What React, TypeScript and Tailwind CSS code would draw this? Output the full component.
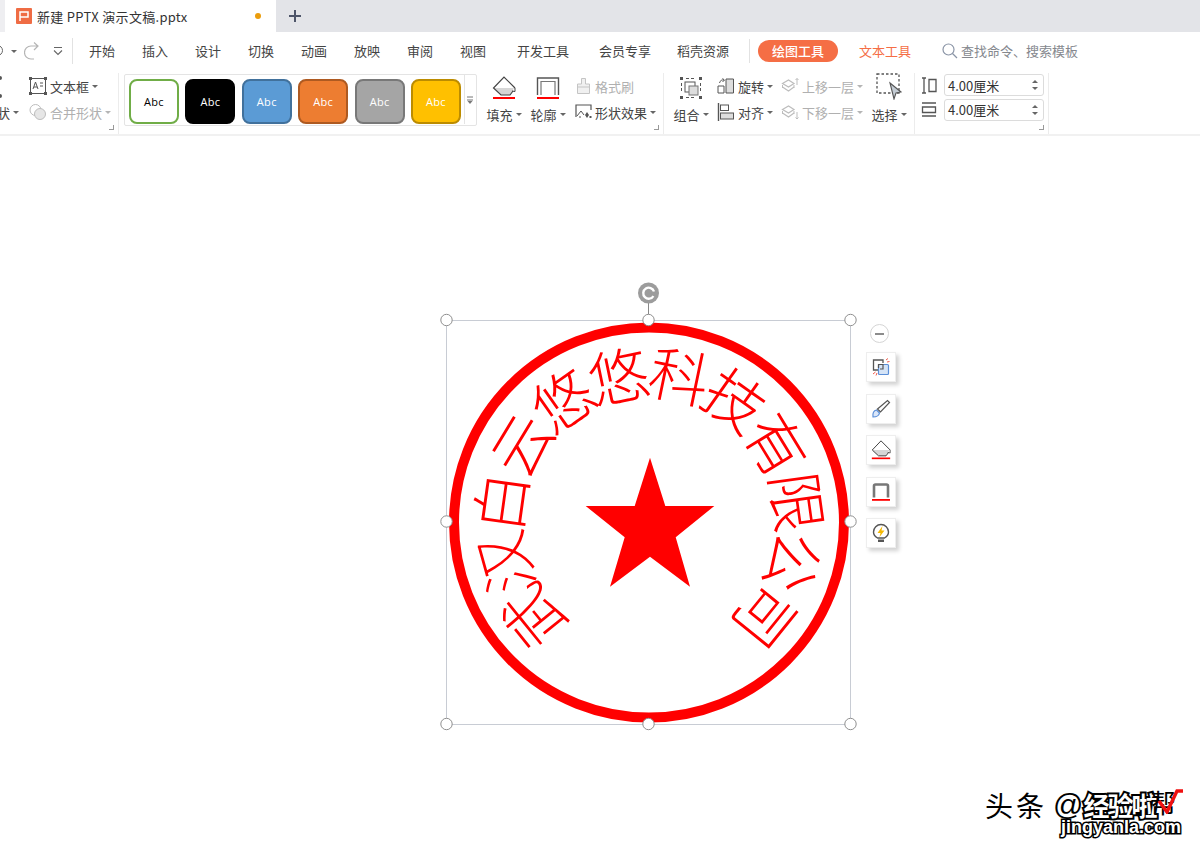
import React from 'react'

const menus = [
  { label: '开始', w: 'w-[53px]' },
  { label: '插入', w: 'w-[53px]' },
  { label: '设计', w: 'w-[53px]' },
  { label: '切换', w: 'w-[53px]' },
  { label: '动画', w: 'w-[53px]' },
  { label: '放映', w: 'w-[53px]' },
  { label: '审阅', w: 'w-[53px]' },
  { label: '视图', w: 'w-[57px]' },
  { label: '开发工具', w: 'w-[82px]' },
  { label: '会员专享', w: 'w-[78px]' },
  { label: '稻壳资源', w: 'w-[72px]' },
]

const swatches = [
  'bg-white border-[#70ad47] text-black',
  'bg-black border-black text-white',
  'bg-[#5b9bd5] border-[#41719c] text-white',
  'bg-[#ed7d31] border-[#ae5a21] text-white',
  'bg-[#a5a5a5] border-[#787878] text-white',
  'bg-[#ffc000] border-[#bc8c00] text-white',
]

const stampChars = '武汉白云悠悠科技有限公司'.split('')

function Caret({ light }: { light?: boolean }) {
  return (
    <span
      className={`ml-[3px] inline-block h-0 w-0 border-x-[3px] border-t-[3px] border-x-transparent ${
        light ? 'border-t-[#b5b5b5]' : 'border-t-[#666]'
      }`}
    />
  )
}

function CornerMark() {
  return (
    <span className="absolute bottom-[4px] right-[4px] h-[5px] w-[5px] border-b border-r border-[#999]" />
  )
}

function Icon({ size = 18, children }: { size?: number; children: React.ReactNode }) {
  return (
    <svg width={size} height={size} viewBox={`0 0 ${size} ${size}`} fill="none" className="shrink-0">
      {children}
    </svg>
  )
}

function Tool({
  icon,
  label,
  light,
  caret = true,
}: {
  icon: React.ReactNode
  label: string
  light?: boolean
  caret?: boolean
}) {
  return (
    <div className={`flex h-[26px] items-center ${light ? 'text-[#b0b0b0]' : 'text-[#444]'}`}>
      <span className="flex w-[21px] items-center">{icon}</span>
      <span className="whitespace-nowrap">{label}</span>
      {caret && <Caret light={light} />}
    </div>
  )
}

function BigTool({ icon, label, cls }: { icon: React.ReactNode; label: string; cls: string }) {
  return (
    <div className={`flex flex-col items-center text-[#444] ${cls}`}>
      <div className="flex h-[27px] items-end">{icon}</div>
      <div className="mt-[5px] flex h-[18px] items-center whitespace-nowrap">
        {label}
        <Caret />
      </div>
    </div>
  )
}

const FillIcon = ({ size = 24 }: { size?: number }) => (
  <svg width={size} height={size} viewBox="0 0 24 24" fill="none">
    <path d="M12 1 L23 12 L18 19 H9 L1.5 12 Z" fill="#fff" />
    <path d="M7 12 H22 L18 19 H9 L1.5 12 Z" fill="#d6d6d6" />
    <path d="M23 12 L12 1 L1.5 12 L9 19 H18 L21 15" stroke="#444" strokeWidth="1.2" />
    <path d="M23 12 V15.5 L20 15" stroke="#444" strokeWidth="1" />
    <rect x="1" y="21" width="22" height="2" fill="#f00" />
  </svg>
)

const OutlineIcon = ({ size = 24 }: { size?: number }) => (
  <svg width={size} height={size} viewBox="0 0 24 24" fill="none">
    <path d="M1.5 19 V2 H22.5 V19" stroke="#555" strokeWidth="1.4" />
    <path d="M5 19 V5.5 H19 V19" stroke="#777" strokeWidth="1.2" />
    <rect x="1" y="21" width="22" height="2" fill="#f00" />
  </svg>
)

const LayerIcon = ({ up }: { up?: boolean }) => (
  <Icon>
    <path d="M1.5 6.5 L7.5 3 L13 6.5 L7.5 10 Z" stroke="#bdbdbd" strokeWidth="1.2" />
    <path d="M1.5 10 L7.5 14 L13 10" stroke="#bdbdbd" strokeWidth="1.2" />
    <path d="M1.5 8 V11 M13 8 V11" stroke="#bdbdbd" />
    {up ? (
      <path d="M16 8 V1.5 M14.5 3 L16 1.5 L17.5 3" stroke="#bdbdbd" />
    ) : (
      <path d="M16 9 V16 M14.5 14.5 L16 16 L17.5 14.5" stroke="#bdbdbd" />
    )}
  </Icon>
)

export default function App() {
  return (
    <div className="relative flex h-[845px] w-[1200px] flex-col overflow-hidden bg-white font-['Noto_Sans_CJK_SC','Liberation_Sans',sans-serif] text-[13px] leading-none">
      {/* Tab bar */}
      <div className="flex h-[32px] shrink-0 items-center bg-[#e3e4e8]">
        <div className="h-full w-[5px] bg-[#eeeef1]" />
        <div className="flex h-full w-[271px] items-center bg-white pl-[11px]">
          <span className="flex h-[16px] w-[16px] items-center justify-center rounded-[1px] bg-[#ef6c44]">
            <svg width="12" height="12" viewBox="0 0 12 12" fill="none">
              <path d="M2 11 V2 H10 V7 H2" stroke="#fff" strokeWidth="1.5" />
            </svg>
          </span>
          <span className="ml-[5px] text-[13px] tracking-[0.3px] text-[#333]">新建 PPTX 演示文稿.pptx</span>
          <span className="ml-[67px] h-[6px] w-[6px] rounded-full bg-[#eb9d0c]" />
        </div>
        <svg width="14" height="14" viewBox="0 0 14 14" className="ml-[12px]">
          <path d="M7 1 V13 M1 7 H13" stroke="#4e5569" strokeWidth="2" />
        </svg>
      </div>

      {/* Menu row */}
      <div className="flex h-[37px] shrink-0 items-center text-[#444]">
        <div className="relative flex h-[26px] w-[73px] items-center border-r border-[#e2e2e2]">
          <span className="absolute -left-[8px] h-[11px] w-[11px] rounded-full border-[1.5px] border-[#666]" />
          <span className="absolute left-[8px] top-[12px] flex"><Caret /></span>
          <svg width="16" height="18" viewBox="0 0 16 18" fill="none" className="absolute left-[24px] top-[4px]">
            <path d="M10 17 H7 A6.5 6.5 0 0 1 7 4 H14 M10 0.5 L14 4 L10 8" stroke="#b5b5b5" strokeWidth="1.2" />
          </svg>
          <svg width="10" height="10" viewBox="0 0 10 10" fill="none" className="absolute left-[53px]">
            <path d="M1 1.5 H9 M1 4.5 L5 8.5 L9 4.5" stroke="#666" strokeWidth="1.1" />
          </svg>
        </div>
        <div className="ml-[16px] flex">
          {menus.map((m) => (
            <span key={m.label} className={`${m.w} whitespace-nowrap`}>
              {m.label}
            </span>
          ))}
        </div>
        <span className="h-[24px] w-px bg-[#e2e2e2]" />
        <span className="ml-[8px] flex h-[22px] w-[80px] items-center justify-center rounded-full bg-[#f56e45] font-medium text-white">
          绘图工具
        </span>
        <span className="ml-[21px] text-[#f56e45]">文本工具</span>
        <svg width="16" height="16" viewBox="0 0 16 16" fill="none" className="ml-[31px]">
          <circle cx="6.5" cy="6.5" r="5.5" stroke="#8a94a6" strokeWidth="1.2" />
          <path d="M10.5 10.5 L15 15" stroke="#8a94a6" strokeWidth="1.2" />
        </svg>
        <span className="ml-[3px] text-[#85888e]">查找命令、搜索模板</span>
      </div>

      {/* Ribbon */}
      <div className="flex h-[67px] shrink-0 border-b-2 border-[#f1f1f1] pt-[4px] text-[13px]">
        <div className="relative flex w-[119px] shrink-0 border-r border-[#ececec]">
          <div className="flex w-[29px] flex-col overflow-hidden text-[#444]">
            <div className="flex h-[26px] flex-col justify-between py-[3px]">
              <span className="-ml-[2px] h-[4px] w-[4px] rounded-full bg-[#555]" />
              <span className="-ml-[2px] -mb-[2px] h-[4px] w-[4px] rounded-full bg-[#555]" />
            </div>
            <div className="flex h-[26px] items-center pl-0">
              <span className="-ml-[3px]">状</span>
              <Caret />
            </div>
          </div>
          <div className="flex flex-col">
            <Tool
              label="文本框"
              icon={
                <Icon>
                  <rect x="1.5" y="1.5" width="15" height="15" stroke="#555" />
                  <path d="M4 12 L6.5 5 L9 12 M5 10 H8 M11 6 H14 M11 9 H14" stroke="#555" />
                  <path d="M0 0h3v3H0z M15 0h3v3h-3z M0 15h3v3H0z M15 15h3v3h-3z" fill="#555" />
                </Icon>
              }
            />
            <Tool
              label="合并形状"
              light
              icon={
                <Icon>
                  <circle cx="6.5" cy="7" r="5.5" stroke="#bdbdbd" />
                  <circle cx="11" cy="11" r="5.5" fill="#e6e6e6" stroke="#bdbdbd" />
                </Icon>
              }
            />
          </div>
          <CornerMark />
        </div>

        {/* Style gallery */}
        <div className="ml-[5px] mt-[1px] flex h-[52px] w-[353px] shrink-0 items-end rounded-[2px] border border-[#e4e4e4] pb-[1px] pl-[4px]">
          <div className="flex gap-[6.4px]">
            {swatches.map((s, i) => (
              <div
                key={i}
                className={`flex h-[45px] w-[50px] items-center justify-center rounded-[8px] border-[2px] font-['Open_Sans',sans-serif] text-[11px] tracking-[0.3px] ${s}`}
              >
                Abc
              </div>
            ))}
          </div>
          <div className="ml-[3px] flex h-full flex-1 items-center justify-center border-l border-[#e4e4e4]">
            <svg width="8" height="8" viewBox="0 0 8 8" fill="none">
              <path d="M1 1 H7 M1 4 H7" stroke="#777" />
              <path d="M1.5 5 L4 8 L6.5 5 Z" fill="#777" />
            </svg>
          </div>
        </div>

        {/* Fill / outline */}
        <div className="relative flex w-[187px] shrink-0 border-r border-[#ececec]">
          <BigTool cls="ml-[9px] w-[36px]" label="填充" icon={<FillIcon />} />
          <BigTool cls="ml-[8px] w-[36px]" label="轮廓" icon={<OutlineIcon />} />
          <div className="ml-[8px] flex flex-col">
            <Tool
              label="格式刷"
              light
              caret={false}
              icon={
                <span className="pl-[2px]">
                  <svg width="15" height="18" viewBox="0 0 15 18" fill="none">
                    <path d="M5.5 1.5 H9.5 V7 H13.5 V16.5 H1.5 V7 H5.5 Z" fill="#f0f0f0" stroke="#c4c4c4" />
                    <path d="M1.5 10 H13.5" stroke="#c4c4c4" />
                  </svg>
                </span>
              }
            />
            <Tool
              label="形状效果"
              icon={
                <Icon>
                  <path d="M2 14 V2 H17 V7 M7 14 H5" stroke="#555" strokeWidth="1.2" />
                  <path d="M3 13 L7 8 L10 12" stroke="#555" />
                  <path d="M13 9 L15 12 L13 15 L11 12 Z" fill="#555" />
                  <rect x="15.5" y="13" width="2" height="2" fill="#555" />
                </Icon>
              }
            />
          </div>
          <CornerMark />
        </div>

        {/* Arrange */}
        <div className="flex w-[251px] shrink-0 border-r border-[#ececec]">
          <BigTool
            cls="ml-[9px] w-[36px]"
            label="组合"
            icon={
              <svg width="24" height="24" viewBox="0 0 24 24" fill="none">
                <rect x="1" y="1" width="3" height="3" fill="#555" />
                <rect x="20" y="1" width="3" height="3" fill="#555" />
                <rect x="1" y="20" width="3" height="3" fill="#555" />
                <rect x="20" y="20" width="3" height="3" fill="#555" />
                <path d="M7 2.5 H17 M7 21.5 H17 M2.5 7 V17 M21.5 7 V17" stroke="#555" strokeDasharray="3 2" />
                <rect x="6" y="6" width="10" height="10" stroke="#555" />
                <rect x="10" y="10" width="9" height="9" fill="#ddd" stroke="#777" />
              </svg>
            }
          />
          <div className="ml-[8px] flex w-[64px] flex-col">
            <Tool
              label="旋转"
              icon={
                <Icon>
                  <path d="M1 16 V9 H7 V16 Z" stroke="#555" />
                  <path d="M9 16 V2 H16.5 V16 Z" fill="#ddd" stroke="#555" />
                  <path d="M2.5 6 C3 3.5 5 2.5 7 3 M5.5 1.5 L7.5 3 L5.5 5" stroke="#555" />
                </Icon>
              }
            />
            <Tool
              label="对齐"
              icon={
                <Icon>
                  <path d="M1.5 0 V18" stroke="#555" strokeWidth="1.4" />
                  <rect x="3.5" y="2" width="8" height="5.5" stroke="#555" />
                  <rect x="3.5" y="10" width="13" height="6" fill="#ddd" stroke="#555" />
                </Icon>
              }
            />
          </div>
          <div className="flex w-[90px] flex-col">
            <Tool label="上移一层" light icon={<LayerIcon up />} />
            <Tool label="下移一层" light icon={<LayerIcon />} />
          </div>
          <BigTool
            cls="ml-0 w-[36px]"
            label="选择"
            icon={
              <svg width="26" height="27" viewBox="0 0 26 27" fill="none">
                <rect x="1" y="1" width="22" height="19" stroke="#555" strokeWidth="1.3" strokeDasharray="2.5 2" />
                <path d="M14 10 L25 19 L20 20 L18 26 Z" fill="#c4ccd4" stroke="#555" strokeWidth="1.1" />
              </svg>
            }
          />
        </div>

        {/* Size */}
        <div className="relative flex w-[134px] shrink-0 flex-col gap-[2.5px] border-r border-[#ececec] pl-[6px] pt-[1px]">
          {['h', 'w'].map((k) => (
            <div key={k} className="flex items-center">
              <svg width="16" height="17" viewBox="0 0 16 17" fill="none">
                {k === 'h' ? (
                  <path d="M1 1 H5 M1 16 H5 M3 1 V16 M8 2.5 H15 V14.5 H8 Z" stroke="#555" strokeWidth="1.3" />
                ) : (
                  <path d="M1 2 H15 M1 15 H15 M1.5 6 H14.5 V11.5 H1.5 Z" stroke="#555" strokeWidth="1.3" />
                )}
              </svg>
              <div className="ml-[7px] flex h-[22px] w-[100px] items-center justify-between rounded-[3px] border border-[#dcdcdc] pl-[3px] pr-[5px] text-[#333]">
                <span>4.00厘米</span>
                <span className="flex flex-col gap-[4px]">
                  <span className="h-0 w-0 border-x-[3px] border-b-[3px] border-x-transparent border-b-[#666]" />
                  <span className="h-0 w-0 border-x-[3px] border-t-[3px] border-x-transparent border-t-[#666]" />
                </span>
              </div>
            </div>
          ))}
          <CornerMark />
        </div>
      </div>

      {/* Canvas */}
      <div className="relative flex-1 bg-white">
        <svg
          width="440"
          height="460"
          viewBox="430 275 440 460"
          className="absolute left-[430px] top-[139px]"
          fill="none"
        >
          <circle cx="649" cy="522.5" r="195" stroke="#f00" strokeWidth="10" />
          <polygon
            points="650,457.7 665.3,506 714.3,506 675.7,537.3 690,586.7 650,556.7 610,586.7 624.7,537.3 585.7,506 634.7,506"
            fill="#f00"
          />
          {stampChars.map((c, i) => (
            <text
              key={i}
              x="649"
              y="369.5"
              textAnchor="middle"
              dominantBaseline="central"
              fontSize="60"
              fontWeight="300"
              fill="#f00"
              transform={`rotate(${-129 + 23.45 * i} 649 522.5)`}
            >
              {c}
            </text>
          ))}
          <rect x="446.5" y="320.5" width="404" height="404" stroke="#c8ccd4" />
          <path d="M648.5 303 V320" stroke="#888" />
          <circle cx="648.5" cy="293" r="10.5" fill="#9c9c9c" />
          <path d="M653.5 296 A5.5 5.5 0 1 1 654 291.5" stroke="#fff" strokeWidth="2.4" />
          <path d="M650 292 L656 292 L654.5 297 Z" fill="#9c9c9c" />
          {[
            [446.5, 320],
            [648.5, 320],
            [850.5, 320],
            [446.5, 521.5],
            [850.5, 521.5],
            [446.5, 724],
            [648.5, 724],
            [850.5, 724],
          ].map(([x, y]) => (
            <circle key={`${x}-${y}`} cx={x} cy={y} r="5.7" fill="#fff" stroke="#8f8f8f" />
          ))}
        </svg>

        {/* Floating shape tools */}
        <div className="absolute left-[866px] top-[188px] flex w-[30px] flex-col items-center">
          <span className="-ml-[3px] flex h-[19px] w-[19px] items-center justify-center rounded-full border border-[#d5d5d5]">
            <span className="h-[2px] w-[9px] bg-[#8c8c8c]" />
          </span>
          <div className="mt-[9px] flex flex-col gap-[11.5px]">
            <FloatButton>
              <svg width="20" height="20" viewBox="0 0 20 20" fill="none">
                <path d="M7 13 H2.5 V3 H12 V6" stroke="#555" strokeWidth="1.3" />
                <rect x="7.5" y="7.5" width="10" height="10" rx="1" fill="#d5e4f7" stroke="#5b8fd8" strokeWidth="1.2" />
                <path d="M7.5 11 V7.5 H12 V12 H9" stroke="#555" strokeWidth="1.2" />
                <path d="M15 3 L17 1.5 M16 5 L18.5 4.5 M2 17 L4.5 15 M5 18.5 L6 16" stroke="#f05a4a" />
              </svg>
            </FloatButton>
            <FloatButton>
              <svg width="20" height="20" viewBox="0 0 20 20" fill="none">
                <path d="M2 18 C1.5 14 3 11.5 5.5 11 L8.5 14 C8 16.5 5 18 2 18 Z" fill="#dbe7f9" stroke="#5b8fd8" strokeWidth="1.2" />
                <path d="M6.5 10 L16.5 1.5 L18.5 3.5 L9.5 13 Z" fill="#fff" stroke="#555" strokeWidth="1.2" />
              </svg>
            </FloatButton>
            <FloatButton>
              <FillIcon size={20} />
            </FloatButton>
            <FloatButton>
              <svg width="20" height="20" viewBox="0 0 20 20" fill="none">
                <path d="M3 15.5 V4 Q3 2.5 4.5 2.5 H15.5 Q17 2.5 17 4 V15.5" stroke="#777" strokeWidth="2.6" />
                <rect x="1" y="17" width="18" height="1.8" fill="#f00" />
              </svg>
            </FloatButton>
            <FloatButton>
              <svg width="20" height="20" viewBox="0 0 20 20" fill="none">
                <path d="M6.5 15 C4 13.5 2.5 11.5 2.5 9 A7.5 7.5 0 0 1 17.5 9 C17.5 11.5 16 13.5 13.5 15 Z" fill="#fff" stroke="#555" strokeWidth="1.4" />
                <path d="M7 16.5 H13 V19 H7 Z" fill="#555" />
                <path d="M11.5 3 L6.5 10 H9.5 L8.5 14 L13.5 7.5 H10.5 Z" fill="#f5b800" />
              </svg>
            </FloatButton>
          </div>
        </div>

        {/* Watermark */}
        <div className="absolute left-[985px] top-[652px] flex h-[34px] items-center font-bold">
          <span className="text-[28px] font-normal tracking-[3px] text-black [text-shadow:2px_2px_0_#fff,-1px_-1px_0_#fff]">头条</span>
          <span className="ml-[6px] font-['Liberation_Sans',sans-serif] text-[30px] font-normal text-black [text-shadow:1px_1px_0_#fff]">@</span>
          <span className="text-[26px] tracking-[-2px] text-white [-webkit-text-stroke:4px_#000] [paint-order:stroke_fill]">经验啦</span>
        </div>
        <span className="absolute left-[1150px] top-[653px] text-[26px] text-black">帮</span>
        <svg width="26" height="26" viewBox="0 0 26 26" fill="none" className="absolute left-[1157px] top-[652px]">
          <path d="M2 13 L10 24 L20 3 H26" stroke="#f01010" strokeWidth="3.4" />
        </svg>
        <span className="absolute left-[1061px] top-[682px] font-['Liberation_Sans',sans-serif] text-[18px] font-bold text-white [-webkit-text-stroke:3px_#000] [paint-order:stroke_fill]">
          jingyanla.com
        </span>
      </div>
    </div>
  )
}

function FloatButton({ children }: { children: React.ReactNode }) {
  return (
    <div className="flex h-[30px] w-[30px] items-center justify-center border border-[#eeeeee] bg-white shadow-[3px_3px_4px_rgba(0,0,0,0.18)]">
      {children}
    </div>
  )
}
